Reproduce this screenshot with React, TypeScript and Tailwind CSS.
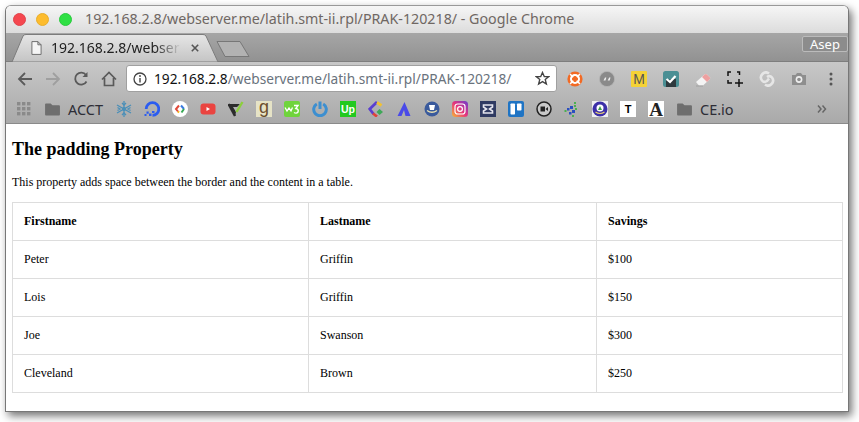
import React from "react";

const uiFont = "font-['Noto_Sans','Open_Sans',sans-serif]";

function Sv({ children, className = "" }: { children: React.ReactNode; className?: string }) {
  return (
    <svg viewBox="0 0 16 16" className={"w-4 h-4 shrink-0 " + className}>
      {children}
    </svg>
  );
}

function Folder() {
  return (
    <svg viewBox="0 0 16 14" className="w-[15px] h-[13px] shrink-0">
      <path d="M0 1.5 Q0 .5 1 .5 H6 L8 2.5 H15 Q16 2.5 16 3.5 V12.5 Q16 13.5 15 13.5 H1 Q0 13.5 0 12.5 Z" fill="#6e6e6e" />
    </svg>
  );
}

const bookmarks: React.ReactNode[] = [
  <Sv key="snow">
    <g stroke="#4a8fb8" strokeWidth="1.3" fill="none">
      <path d="M8 0V16M1 4L15 12M1 12L15 4" />
      <path d="M6 2L8 4L10 2M6 14L8 12L10 14M1.5 6.5L4 8L1.5 9.5M14.5 6.5L12 8L14.5 9.5" />
    </g>
    <circle cx="8" cy="8" r="2" fill="#4a8fb8" />
  </Sv>,
  <Sv key="do">
    <path d="M2.2 8A6.3 6.3 0 1 1 8.5 14.3" fill="none" stroke="#2b5cf0" strokeWidth="2.8" />
    <path d="M8 10H10.5V12H8ZM5 12.5H7.5V15H5ZM2.5 10.5H4.7V12.7H2.5ZM0.5 13H2.5V15H0.5Z" fill="#2b5cf0" />
  </Sv>,
  <Sv key="gdev">
    <circle cx="8" cy="8" r="8" fill="#fff" />
    <path d="M7 4.5L4 8L6 10.5" fill="none" stroke="#e04a3a" strokeWidth="2" />
    <path d="M9 4.5L12 8" fill="none" stroke="#3a7be0" strokeWidth="2" />
    <path d="M12 8L9.5 11.5" fill="none" stroke="#35a853" strokeWidth="2" />
    <path d="M6 10.5L7 11.5" fill="none" stroke="#f5b400" strokeWidth="2" />
  </Sv>,
  <Sv key="yt">
    <rect x="0.5" y="2.5" width="15" height="11" rx="3" fill="#ea4440" />
    <path d="M6.5 6V10L10 8Z" fill="#fff" />
  </Sv>,
  <Sv key="v">
    <path d="M0.5 3H12L9 6H5L8 11L7 15Z" fill="#2c2c2c" />
    <path d="M0.5 3L7 15" stroke="#2c2c2c" strokeWidth="2.4" fill="none" />
    <path d="M8.5 11L14.5 1" stroke="#8ccf3c" strokeWidth="2.4" fill="none" />
  </Sv>,
  <span key="g" className="w-4 h-4 shrink-0 bg-[#e6e3c6] flex items-center justify-center font-['Liberation_Sans',sans-serif] text-[18px] leading-[14px] text-[#6b4f2e] pb-[4px]">g</span>,
  <Sv key="w3">
    <rect width="16" height="16" rx="2" fill="#6fd43c" />
    <path d="M1 6.5L3 10L5 7L7 10L8.5 6.5" fill="none" stroke="#fff" strokeWidth="1.3" />
    <path d="M10 4.5H14L11.8 7.5Q15 8 14 11Q12.5 13 10 11.5" fill="none" stroke="#fff" strokeWidth="1.4" />
  </Sv>,
  <Sv key="power">
    <path d="M4.8 3A6.3 6.3 0 1 0 11.2 3" fill="none" stroke="#3d8fd0" strokeWidth="3" />
    <path d="M8 0.5V8" stroke="#3d8fd0" strokeWidth="3" />
  </Sv>,
  <span key="up" className="w-4 h-4 shrink-0 bg-[#22c91f] flex items-center justify-center font-['Liberation_Sans',sans-serif] text-[10.5px] font-bold leading-none text-white">Up</span>,
  <Sv key="clickup">
    <path d="M9 1L1.7 8L5.5 13" fill="none" stroke="#5a3fd0" strokeWidth="2.8" />
    <path d="M9 1.5L13.5 4.5" fill="none" stroke="#f2c230" strokeWidth="2.8" />
    <path d="M11.5 8L15 11L11.5 14L8.5 11Z" fill="#3fa858" />
    <path d="M5 12.5L9 15.5" fill="none" stroke="#e0423a" strokeWidth="2.8" />
  </Sv>,
  <Sv key="atlas">
    <path d="M8.5 1L14.5 15H9.5L8 9L5.5 15H1.5Z" fill="#4a4ae8" />
  </Sv>,
  <Sv key="kemd1">
    <circle cx="8" cy="8" r="7.5" fill="#3a5a9c" />
    <path d="M5 4H11L10 9H6Z" fill="#fff" />
    <path d="M3 9.5Q8 13 13 9.5" stroke="#e8e0b0" strokeWidth="1.5" fill="none" />
  </Sv>,
  <Sv key="ig">
    <defs>
      <linearGradient id="ig" x1="0" y1="1" x2="1" y2="0">
        <stop offset="0" stopColor="#f7b733" />
        <stop offset=".5" stopColor="#e5347e" />
        <stop offset="1" stopColor="#6a3fd0" />
      </linearGradient>
    </defs>
    <rect width="16" height="16" rx="3.5" fill="url(#ig)" />
    <rect x="3" y="3" width="10" height="10" rx="2.5" fill="none" stroke="#fff" strokeWidth="1.2" />
    <circle cx="8" cy="8" r="2.4" fill="none" stroke="#fff" strokeWidth="1.2" />
  </Sv>,
  <Sv key="x">
    <rect width="16" height="16" fill="#2f3a62" />
    <path d="M3.5 4H12.5V6L9.5 8L12.5 10V12H3.5V10L6.5 8L3.5 6Z" fill="none" stroke="#e5e5ee" strokeWidth="1.6" />
  </Sv>,
  <Sv key="trello">
    <rect width="16" height="16" rx="2" fill="#1f74c4" />
    <rect x="2.5" y="2.5" width="4.5" height="11" rx=".7" fill="#fff" />
    <rect x="9" y="2.5" width="4.5" height="7" rx=".7" fill="#fff" />
  </Sv>,
  <Sv key="rec">
    <circle cx="8" cy="8" r="7" fill="#c8c8c8" stroke="#222" strokeWidth="1.5" />
    <rect x="4.5" y="5.5" width="4.5" height="5" fill="#222" />
    <path d="M9.5 8L12 6V10Z" fill="#222" />
  </Sv>,
  <Sv key="dots">
    <g fill="#2a4fc0">
      <rect x="6" y="5" width="3" height="3" />
      <rect x="3" y="7" width="2.5" height="2.5" />
      <rect x="8" y="9" width="3" height="3" />
      <rect x="5" y="11" width="2.5" height="2.5" />
    </g>
    <g fill="#4ab050">
      <rect x="10" y="1" width="2" height="2" />
      <rect x="0.5" y="9" width="2" height="2" />
      <rect x="11" y="7" width="2" height="2" />
      <rect x="8" y="14" width="2" height="2" />
      <rect x="10" y="4" width="2" height="2" />
    </g>
  </Sv>,
  <Sv key="kemd2">
    <rect width="16" height="16" fill="#f0f0f0" />
    <circle cx="8" cy="8" r="7.5" fill="#3c2fa8" />
    <circle cx="8" cy="7" r="3.5" fill="#fff" />
    <path d="M6 9L8 5L10 9Z" fill="#3f9a50" />
    <path d="M3.5 11Q8 14 12.5 11" stroke="#e8d070" strokeWidth="1.2" fill="none" />
  </Sv>,
  <span key="T" className="w-4 h-4 shrink-0 bg-white flex items-center justify-center font-['Liberation_Sans',sans-serif] text-[11px] font-bold leading-none text-black">T</span>,
  <span key="A" className="w-4 h-4 shrink-0 bg-white flex items-center justify-center font-['Liberation_Serif',serif] text-[19px] font-bold leading-none text-[#222]">A</span>,
];

const extensions: React.ReactNode[] = [
  <Sv key="e1">
    <circle cx="8" cy="8" r="7.6" fill="#f26a24" />
    <circle cx="8" cy="8" r="4" fill="none" stroke="#fff" strokeWidth="2" />
    <path d="M3 3L13 13M13 3L3 13" stroke="#fff" strokeWidth="1.6" />
    <circle cx="8" cy="8" r="2.4" fill="#f26a24" />
  </Sv>,
  <Sv key="e2">
    <circle cx="8" cy="8" r="7.6" fill="#8a8a8a" stroke="#b5b5b5" strokeWidth=".8" />
    <path d="M4.5 9.5L6 6.5H7.3L6.5 9.5ZM8.7 9.5L10.2 6.5H11.5L10.7 9.5Z" fill="#eee" />
  </Sv>,
  <span key="e3" className="w-4 h-4 shrink-0 bg-[#f5d236] rounded-[1px] flex items-center justify-center font-['Liberation_Sans',sans-serif] text-[14px] leading-none text-[#555]">M</span>,
  <Sv key="e4">
    <rect width="16" height="16" rx="2.5" fill="#4a8f94" />
    <path d="M3 9V16H13V8Z" fill="#2f3a3e" />
    <path d="M3.5 8L7 11L12.5 5" fill="none" stroke="#fff" strokeWidth="2.2" />
  </Sv>,
  <Sv key="e5">
    <path d="M1 11L9.5 3.5Q11 2.5 12 3.5L15 6.5Q15.5 7.5 14.5 8.5L8 14.5H4Z" fill="#f4f4f4" />
    <path d="M9.5 3.5Q11 2.5 12 3.5L15 6.5Q15.5 7.5 14.5 8.5L12 11L7 6Z" fill="#eda0a0" />
    <path d="M1 15H8" stroke="#999" strokeWidth=".8" />
  </Sv>,
  <Sv key="e6">
    <g fill="none" stroke="#111" strokeWidth="1.5">
      <path d="M4 1H1V5M10 1H12.5V4M1 9V12H5" />
      <path d="M12 8V16M8 12H16" />
    </g>
  </Sv>,
  <Sv key="e7">
    <path d="M10 2.5A5 5 0 0 0 3 9.5Q5 12 8 10L10 7.5" fill="none" stroke="#e6e6e6" strokeWidth="2.6" />
    <path d="M6 13.5A5 5 0 0 0 13 6.5Q11 4 8 6" fill="none" stroke="#e6e6e6" strokeWidth="2.6" />
  </Sv>,
  <Sv key="e8">
    <path d="M1 4H4.5L6 2H10L11.5 4H15V14H1Z" fill="#8e8e8e" />
    <circle cx="8" cy="8.5" r="3.4" fill="#eee" />
    <circle cx="8" cy="8.5" r="1.8" fill="#8e8e8e" />
  </Sv>,
];

const rows = [
  ["Peter", "Griffin", "$100"],
  ["Lois", "Griffin", "$150"],
  ["Joe", "Swanson", "$300"],
  ["Cleveland", "Brown", "$250"],
];

export default function App() {
  return (
    <div className="w-[859px] h-[422px] bg-white pl-[5px] pt-[5px] overflow-hidden">
      <div className="w-[844px] h-[407px] flex flex-col border border-[#777] border-t-[#999] rounded-t-[6px] bg-white shadow-[3px_4px_9px_rgba(0,0,0,0.55)] overflow-hidden">
        {/* title bar */}
        <div className={"h-[27px] shrink-0 flex items-center bg-gradient-to-b from-[#f6f6f6] to-[#dcdcdc] pl-[7px] " + uiFont}>
          <span className="w-[13px] h-[13px] rounded-full bg-[#f5474f] border border-[#e0444c]" />
          <span className="w-[13px] h-[13px] rounded-full bg-[#fdbc2e] border border-[#e8ae2c] ml-[10px]" />
          <span className="w-[13px] h-[13px] rounded-full bg-[#2fe044] border border-[#2acb3e] ml-[10px]" />
          <span className="ml-[13px] text-[14.25px] leading-none text-[#6f6763] whitespace-nowrap">
            192.168.2.8/webserver.me/latih.smt-ii.rpl/PRAK-120218/ - Google Chrome
          </span>
        </div>
        {/* tab strip */}
        <div className={"relative h-[29px] shrink-0 bg-gradient-to-b from-[#a6a6a6] to-[#929292] border-b border-[#7e7e7e] " + uiFont}>
          <svg className="absolute left-[5px] top-[1px]" width="210" height="28" viewBox="0 0 210 28">
            <defs>
              <linearGradient id="tab" x1="0" y1="0" x2="0" y2="1">
                <stop offset="0" stopColor="#e6e6e6" />
                <stop offset="1" stopColor="#c4c4c4" />
              </linearGradient>
            </defs>
            <path d="M1 28L12 2Q13 0.5 15 0.5H192Q194 0.5 195 2L207 28Z" fill="url(#tab)" stroke="#7c7c7c" />
          </svg>
          <svg className="absolute left-[210px] top-[7px]" width="36" height="18" viewBox="0 0 36 18">
            <path d="M1 1.5H24L33 16.5H9Z" fill="#b2b2b2" stroke="#777" />
          </svg>
          <div className="absolute left-[25px] top-[6px] flex items-center h-[17px]">
            <svg viewBox="0 0 12 15" className="w-[11px] h-[14px]">
              <path d="M1 .5H7.5L11 4V14.5H1Z M7.5 .5V4H11" fill="#f5f5f5" stroke="#666" />
            </svg>
            <span className="ml-[9px] w-[130px] whitespace-nowrap text-[14px] leading-none text-[#222] [mask-image:linear-gradient(to_right,#000_80%,transparent)]">
              192.168.2.8/webser
            </span>
            <svg viewBox="0 0 8 8" className="w-2 h-2 ml-[10px]">
              <path d="M.8 .8L7.2 7.2M7.2 .8L.8 7.2" stroke="#555" strokeWidth="1.6" />
            </svg>
          </div>
          <span className="absolute right-0 top-[3px] h-[16px] w-[46px] border border-[#bbb] rounded-[2px] bg-[#8c8c8c] text-[13px] leading-[14px] text-center text-white">
            Asep
          </span>
        </div>
        {/* toolbar + bookmarks */}
        <div className={"shrink-0 bg-gradient-to-b from-[#c8c8c8] to-[#a9a9a9] border-b border-[#8a8a8a] " + uiFont}>
          <div className="h-[33px] flex items-center pl-[11px]">
            <svg viewBox="0 0 16 16" className="w-4 h-4"><path d="M15 8H2M8 2L2 8L8 14" fill="none" stroke="#5a5a5a" strokeWidth="1.8" /></svg>
            <svg viewBox="0 0 16 16" className="w-4 h-4 ml-3"><path d="M1 8H14M8 2L14 8L8 14" fill="none" stroke="#9f9f9f" strokeWidth="1.8" /></svg>
            <svg viewBox="0 0 16 16" className="w-4 h-4 ml-3"><path d="M13.5 10.5A6 6 0 1 1 13 4" fill="none" stroke="#5a5a5a" strokeWidth="1.8" /><path d="M14.5 1V6H9.5Z" fill="#5a5a5a" /></svg>
            <svg viewBox="0 0 16 16" className="w-4 h-4 ml-3"><path d="M1 8.5L8 1.5L15 8.5M3.5 7V14.5H12.5V7" fill="none" stroke="#5a5a5a" strokeWidth="1.7" /></svg>
            <div className="ml-[9px] w-[431px] h-[27px] bg-white rounded-[3px] border border-[#a0a0a0] flex items-center pl-[6px] pr-[6px]">
              <svg viewBox="0 0 14 14" className="w-[14px] h-[14px] shrink-0">
                <circle cx="7" cy="7" r="6" fill="none" stroke="#444" strokeWidth="1.3" />
                <path d="M7 6V10.5" stroke="#444" strokeWidth="1.4" />
                <circle cx="7" cy="4" r=".9" fill="#444" />
              </svg>
              <span className="ml-[7px] text-[13.7px] leading-none whitespace-nowrap text-[#69727c]">
                <span className="text-[#111]">192.168.2.8</span>/webserver.me/latih.smt-ii.rpl/PRAK-120218/
              </span>
              <svg viewBox="0 0 16 16" className="w-[15px] h-[15px] ml-auto shrink-0">
                <path d="M8 1.5L9.9 6H14.7L10.9 9.1L12.2 14L8 11.3L3.8 14L5.1 9.1L1.3 6H6.1Z" fill="none" stroke="#444" strokeWidth="1.4" />
              </svg>
            </div>
            <div className="ml-[10px] flex items-center gap-4">{extensions}</div>
            <svg viewBox="0 0 4 16" className="w-1 h-4 ml-[22px]">
              <circle cx="2" cy="3" r="1.5" fill="#555" />
              <circle cx="2" cy="8" r="1.5" fill="#555" />
              <circle cx="2" cy="13" r="1.5" fill="#555" />
            </svg>
          </div>
          <div className="h-[28px] flex items-center pl-[11px]">
            <svg viewBox="0 0 14 14" className="w-[14px] h-[14px] shrink-0">
              <g fill="#8a8a8a">
                {[0, 5, 10].flatMap((y) => [0, 5, 10].map((x) => <rect key={x + "-" + y} x={x} y={y} width="3.4" height="3.4" />))}
              </g>
            </svg>
            <span className="ml-[14px] flex items-center"><Folder /></span>
            <span className="ml-[8px] w-[36px] text-[14.5px] leading-none whitespace-nowrap text-[#2d2d36]">ACCT</span>
            <div className="ml-[12px] flex items-center gap-3">{bookmarks}</div>
            <span className="ml-[13px] flex items-center"><Folder /></span>
            <span className="ml-[8px] w-[36px] text-[14.5px] leading-none text-[#2d2d36]">CE.io</span>
            <svg viewBox="0 0 10 8" className="w-[10px] h-2 ml-[81px]">
              <path d="M1 .5L4 4L1 7.5M5.5 .5L8.5 4L5.5 7.5" fill="none" stroke="#666" strokeWidth="1.5" />
            </svg>
          </div>
        </div>
        {/* page */}
        <div className="flex-1 bg-white px-[6px] font-['Liberation_Serif',serif] text-black">
          <h2 className="mt-[14px] text-[18px] leading-[22px] font-bold">The padding Property</h2>
          <p className="mt-[15px] text-[12px] leading-[14px]">
            This property adds space between the border and the content in a table.
          </p>
          <table className="mt-[13px] w-[831px] table-fixed border-collapse text-[12px]">
            <thead>
              <tr className="h-[38px]">
                <th className="w-[296px] border border-[#ddd] pl-[11px] pb-[2px] text-left font-bold">Firstname</th>
                <th className="w-[288px] border border-[#ddd] pl-[11px] pb-[2px] text-left font-bold">Lastname</th>
                <th className="border border-[#ddd] pl-[11px] pb-[2px] text-left font-bold">Savings</th>
              </tr>
            </thead>
            <tbody>
              {rows.map((r) => (
                <tr key={r[0]} className="h-[38px]">
                  {r.map((c, i) => (
                    <td key={i} className="border border-[#ddd] pl-[11px] pb-[2px]">{c}</td>
                  ))}
                </tr>
              ))}
            </tbody>
          </table>
        </div>
      </div>
    </div>
  );
}
